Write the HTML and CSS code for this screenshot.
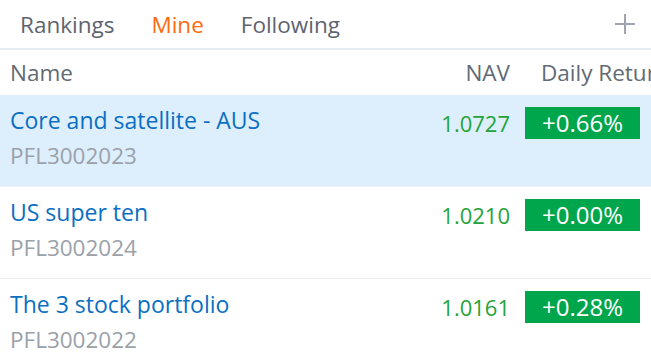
FILE: index.html
```html
<!DOCTYPE html>
<html lang="en">
<head>
  <meta charset="UTF-8">
  <meta name="viewport" content="width=device-width, initial-scale=1.0">
  <title>My Portfolios</title>
  <link rel="stylesheet" href="styles.css">
</head>
<body>
  <!-- Tabs -->
  <div class="tabs">
    <a class="tab">Rankings</a>
    <a class="tab active">Mine</a>
    <a class="tab">Following</a>
    <span class="add">
      <svg viewBox="0 0 22 22"><path d="M11 1v20M1 11h20"></path></svg>
    </span>
  </div>

  <div class="list">
    <div class="head">
      <span class="col-name">Name</span>
      <span class="col-nav">NAV</span>
      <span class="col-ret">Daily Return</span>
    </div>

    <div class="row selected">
      <div class="col-name">
        <div class="title">Core and satellite - AUS</div>
        <div class="code">PFL3002023</div>
      </div>
      <div class="col-nav nav">1.0727</div>
      <div class="col-ret"><span class="badge">+0.66%</span></div>
    </div>

    <div class="row">
      <div class="col-name">
        <div class="title">US super ten</div>
        <div class="code">PFL3002024</div>
      </div>
      <div class="col-nav nav">1.0210</div>
      <div class="col-ret"><span class="badge">+0.00%</span></div>
    </div>

    <div class="row">
      <div class="col-name">
        <div class="title">The 3 stock portfolio</div>
        <div class="code">PFL3002022</div>
      </div>
      <div class="col-nav nav">1.0161</div>
      <div class="col-ret"><span class="badge">+0.28%</span></div>
    </div>
  </div>
</body>
</html>
```

FILE: styles.css
```css
body {
  font-family: "Open Sans", "Noto Sans", sans-serif;
  margin: 0;
  padding: 0;
  background: #fff;
  overflow: hidden;
}
.tabs {
  display: flex;
  align-items: center;
  height: 48px;
  padding-left: 20px;
  gap: 37px;
  border-bottom: 2px solid #e6ebf1;
}
.tab {
  font-size: 22.5px;
  color: #5d646e;
  cursor: pointer;
}
.tab.active {
  color: #ff6a0f;
}
.add {
  margin-left: auto;
  margin-right: 15px;
  width: 22px;
  height: 22px;
}
.add svg {
  display: block;
  width: 22px;
  height: 22px;
  stroke: #9ea5ae;
  stroke-width: 2;
}
.head, .row {
  display: grid;
  grid-template-columns: 1fr auto 115px;
  column-gap: 15px;
  padding: 0 11px 0 10px;
}
.head {
  height: 45px;
  align-items: center;
  font-size: 22.5px;
  color: #626a74;
}
.col-nav {
  text-align: right;
}
.head .col-ret {
  padding-left: 16px;
  white-space: nowrap;
}
.row {
  height: 91px;
  border-bottom: 1px solid #eceff3;
  align-items: start;
}
.row.selected {
  background: #ddeefd;
}
.title {
  margin-top: 11px;
  line-height: 28px;
  font-size: 23px;
  color: #0b6fc3;
}
.code {
  margin-top: 8px;
  line-height: 28px;
  font-size: 22.5px;
  color: #9ba1a9;
}
.nav {
  margin-top: 14px;
  line-height: 28px;
  font-size: 22px;
  color: #23a43a;
}
.badge {
  display: block;
  margin-top: 12px;
  height: 32px;
  line-height: 32px;
  text-align: center;
  background: #00a64b;
  color: #fff;
  font-size: 24px;
}
```
